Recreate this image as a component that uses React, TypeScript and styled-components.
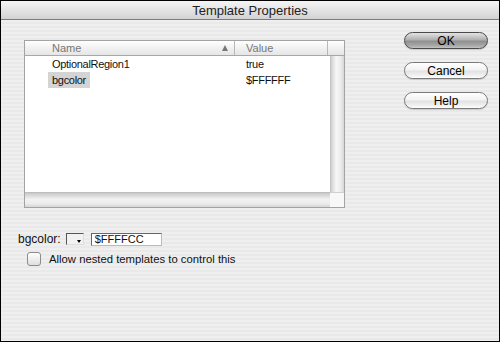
import React from "react";
import styled, { createGlobalStyle } from "styled-components";

const Global = createGlobalStyle`
  html, body { margin: 0; padding: 0; background: #fff; }
  * { box-sizing: border-box; }
`;

const FONT = `"Liberation Sans", Arial, sans-serif`;

const Window = styled.div`
  width: 500px;
  height: 342px;
  border: 1px solid #000;
  display: flex;
  flex-direction: column;
  font-family: ${FONT};
  font-size: 11px;
  color: #111;
  overflow: hidden;
`;

const TitleBar = styled.div`
  height: 19px;
  flex: none;
  display: flex;
  align-items: center;
  justify-content: center;
  font-size: 13px;
  color: #222;
  background: linear-gradient(#f5f5f5, #e2e2e2 55%, #d3d3d3);
  border-bottom: 1px solid #7c7c7c;
`;

const Body = styled.div`
  flex: 1;
  padding: 12px 0 0 17px;
  background: repeating-linear-gradient(to bottom, #efefef 0 2px, #e9e9e9 2px 4px);
  display: flex;
  flex-direction: column;
`;

const TopRow = styled.div`
  display: flex;
  align-items: flex-start;
`;

const ListBox = styled.div`
  margin: 8px 0 0 6px;
  width: 321px;
  height: 168px;
  border: 1px solid #a3a3a3;
  background: #fff;
  display: grid;
  grid-template-columns: 1fr 14px;
  grid-template-rows: 15px 1fr 15px;
`;

const Header = styled.div`
  grid-column: 1 / 3;
  display: grid;
  grid-template-columns: 210px 93px 1fr;
  background: linear-gradient(#ffffff, #f1f1f1 50%, #e6e6e6);
  border-bottom: 1px solid #a8a8a8;
`;

const HeaderCell = styled.div<{ $pad: number; $divider?: boolean }>`
  display: flex;
  align-items: center;
  justify-content: space-between;
  padding-left: ${(p) => p.$pad}px;
  padding-right: 6px;
  color: #777;
  font-size: 11px;
  border-right: ${(p) => (p.$divider ? "1px solid #b8b8b8" : "none")};
`;

const SortArrow = styled.span`
  width: 0;
  height: 0;
  border-left: 3.5px solid transparent;
  border-right: 3.5px solid transparent;
  border-bottom: 6px solid #777;
`;

const Rows = styled.div`
  display: flex;
  flex-direction: column;
  letter-spacing: -0.3px;
`;

const Row = styled.div`
  display: grid;
  grid-template-columns: 210px 1fr;
  height: 16px;
  align-items: center;
`;

const NameCell = styled.div`
  padding-left: 27px;
`;

const NameText = styled.span<{ $selected?: boolean }>`
  padding: 2px 4px;
  margin-left: -4px;
  background: ${(p) => (p.$selected ? "#d4d4d4" : "transparent")};
`;

const ValueCell = styled.div`
  padding-left: 11px;
`;

const VScroll = styled.div`
  background: linear-gradient(to right, #cfcfcf, #f7f7f7 40%, #eeeeee 70%, #d8d8d8);
  border-left: 1px solid #c4c4c4;
`;

const HScroll = styled.div`
  background: linear-gradient(#c9c9c9, #f2f2f2 45%, #ececec 75%, #d6d6d6);
  border-top: 1px solid #bdbdbd;
`;

const Corner = styled.div`
  background: #f8f8f8;
  border-top: 1px solid #d0d0d0;
`;

const ButtonCol = styled.div`
  margin-left: 59px;
  display: flex;
  flex-direction: column;
  gap: 13px;
`;

const PillButton = styled.button<{ $default?: boolean }>`
  width: 84px;
  height: 17px;
  border-radius: 9px;
  border: 1px solid ${(p) => (p.$default ? "#4a4a4a" : "#7a7a7a")};
  font-family: ${FONT};
  font-size: 12px;
  color: #000;
  padding: 0;
  display: flex;
  align-items: center;
  justify-content: center;
  background: ${(p) =>
    p.$default
      ? "linear-gradient(#e4e4e4, #b0b0b0 45%, #8f8f8f 55%, #a9a9a9 85%, #c4c4c4)"
      : "linear-gradient(#ffffff, #f3f3f3 45%, #e2e2e2 55%, #f2f2f2 85%, #ffffff)"};
  box-shadow: 0 1px 1px rgba(0, 0, 0, 0.15);
`;

const ColorRow = styled.div`
  margin-top: 25px;
  display: flex;
  align-items: center;
  height: 12px;
`;

const Label = styled.span`
  font-size: 12px;
  margin-right: 5px;
`;

const Swatch = styled.div`
  position: relative;
  width: 18px;
  height: 12px;
  border: 1px solid #555;
  border-right-color: #ddd;
  border-bottom-color: #ddd;
  background: #f2f2f2;
  margin-right: 7px;
`;

const SwatchArrow = styled.span`
  position: absolute;
  right: 2px;
  bottom: 1px;
  width: 0;
  height: 0;
  border-left: 2px solid transparent;
  border-right: 2px solid transparent;
  border-top: 3px solid #000;
`;

const TextField = styled.div`
  width: 71px;
  height: 13px;
  border: 1px solid #666;
  border-right-color: #bbb;
  border-bottom-color: #bbb;
  background: #fff;
  padding-left: 3px;
  display: flex;
  align-items: center;
  font-size: 11px;
`;

const CheckRow = styled.div`
  margin-top: 7px;
  margin-left: 9px;
  display: flex;
  align-items: center;
  gap: 8px;
  font-size: 11.3px;
`;

const CheckBox = styled.div`
  width: 14px;
  height: 14px;
  border: 1px solid #8c8c8c;
  border-radius: 3px;
  background: linear-gradient(#ffffff, #efefef 50%, #dedede);
`;

export default function App() {
  return (
    <>
      <Global />
      <Window>
        <TitleBar>Template Properties</TitleBar>
        <Body>
          <TopRow>
            <ListBox>
              <Header>
                <HeaderCell $pad={27} $divider>
                  <span>Name</span>
                  <SortArrow />
                </HeaderCell>
                <HeaderCell $pad={11} $divider>
                  <span>Value</span>
                </HeaderCell>
                <HeaderCell $pad={0} />
              </Header>
              <Rows>
                <Row>
                  <NameCell>
                    <NameText>OptionalRegion1</NameText>
                  </NameCell>
                  <ValueCell>true</ValueCell>
                </Row>
                <Row>
                  <NameCell>
                    <NameText $selected>bgcolor</NameText>
                  </NameCell>
                  <ValueCell>$FFFFFF</ValueCell>
                </Row>
              </Rows>
              <VScroll />
              <HScroll />
              <Corner />
            </ListBox>
            <ButtonCol>
              <PillButton $default>OK</PillButton>
              <PillButton>Cancel</PillButton>
              <PillButton>Help</PillButton>
            </ButtonCol>
          </TopRow>
          <ColorRow>
            <Label>bgcolor:</Label>
            <Swatch>
              <SwatchArrow />
            </Swatch>
            <TextField>$FFFFCC</TextField>
          </ColorRow>
          <CheckRow>
            <CheckBox />
            <span>Allow nested templates to control this</span>
          </CheckRow>
        </Body>
      </Window>
    </>
  );
}
